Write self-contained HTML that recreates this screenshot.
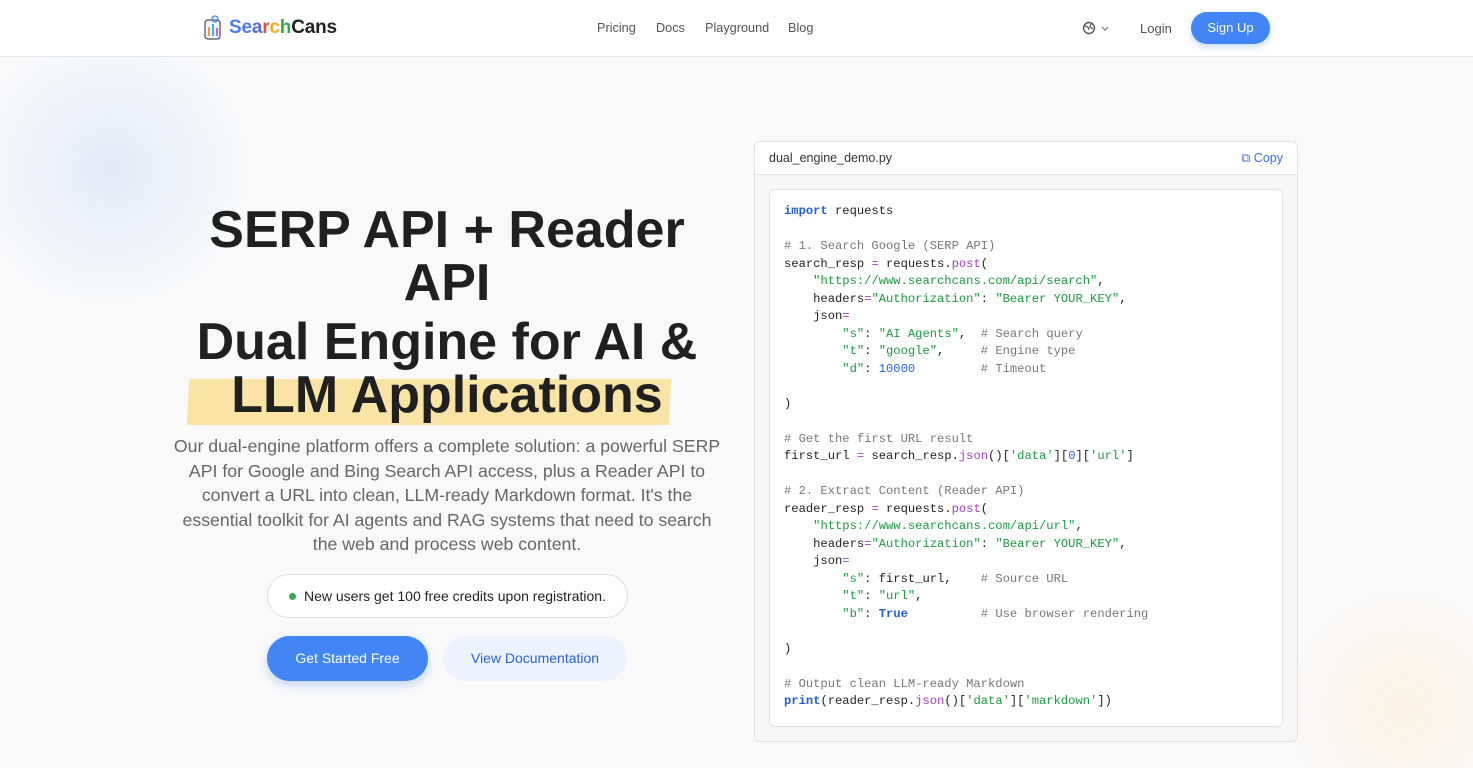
<!DOCTYPE html>
<html><head><meta charset="utf-8"><style>
*{box-sizing:border-box;margin:0;padding:0}
html,body{width:1473px;height:768px;overflow:hidden}
body{font-family:"Liberation Sans",sans-serif;background:#f9f9fa;position:relative;color:#1f1f1f}
.bg{position:absolute;left:0;top:0;width:1473px;height:768px;overflow:hidden}
.blob{position:absolute;left:-40px;top:40px;width:300px;height:260px;border-radius:50%;background:radial-gradient(circle,#e2e9f6 0%,rgba(236,240,248,0.6) 45%,rgba(249,249,250,0) 70%)}
.blob2{position:absolute;left:1273px;top:588px;width:260px;height:240px;border-radius:50%;background:radial-gradient(circle,#fbf4e6 0%,rgba(249,249,250,0) 70%)}
header{position:absolute;top:0;left:0;width:1473px;height:57px;background:#fff;border-bottom:1px solid #e6e6e6}
.logo{position:absolute;left:203px;top:14px;display:flex;align-items:center}
.logo span{font-weight:700;font-size:19px;letter-spacing:-0.2px}
nav a{position:absolute;top:21px;font-size:12.7px;color:#555;text-decoration:none}
.login{position:absolute;left:1140px;top:21px;font-size:13px;color:#555}
.signup{position:absolute;left:1191px;top:12px;width:79px;height:32px;border-radius:16px;background:#4285f4;color:#fff;font-size:13px;text-align:center;line-height:32px;box-shadow:0 3px 8px rgba(66,133,244,.3)}
h1{position:absolute;left:187px;width:520px;text-align:center;font-size:52px;font-weight:700;line-height:53px;color:#202020}
.hlbox{position:absolute;left:188px;top:379px;width:482px;height:46px;background:#f9e4a6;transform:skewX(-3deg)}
p.desc{position:absolute;left:172px;top:434px;width:550px;text-align:center;font-size:17.7px;line-height:24.6px;color:#666}
.pill{position:absolute;left:267px;top:574px;width:361px;height:44px;border:1px solid #ddd;border-radius:22px;background:#fff;font-size:14px;line-height:43px;padding-left:36px;color:#222}
.pill:before{content:"";position:absolute;left:21px;top:18px;width:7px;height:7px;border-radius:50%;background:#34a853}
.b1{position:absolute;left:267px;top:636px;width:161px;height:45px;border-radius:23px;background:#4285f4;color:#fff;font-size:14px;text-align:center;line-height:45px;box-shadow:0 4px 10px rgba(66,133,244,.3)}
.b2{position:absolute;left:443px;top:636px;width:184px;height:45px;border-radius:23px;background:#edf3fe;color:#2a63d4;font-size:14px;text-align:center;line-height:45px}
.card{position:absolute;left:754px;top:141px;width:544px;height:601px;border:1px solid #e2e2e2;border-radius:6px;background:#f7f7f8}
.ch{height:33px;background:#fff;border-bottom:1px solid #e6e6e6;border-radius:6px 6px 0 0;font-size:12.5px;line-height:33px;padding-left:14px;color:#333;position:relative}
.copy{position:absolute;right:14px;top:0;color:#3b6fd8;font-size:12.5px}
.code{position:absolute;left:14px;top:47px;width:514px;height:538px;background:#fff;border:1px solid #e2e2e2;border-radius:6px;padding:13px 0 0 14px;font-family:"Liberation Mono",monospace;font-size:12.15px;line-height:17.5px;white-space:pre;color:#222}
.k{color:#1f5fd6;font-weight:700}.c{color:#777}.s{color:#1a9a3f}.p{color:#a43fc4}.n{color:#2563eb}
</style></head><body>
<div class="bg"><div class="blob"></div><div class="blob2"></div></div>
<header>
<div class="logo"><svg width="20" height="28" viewBox="0 0 20 28"><rect x="2" y="6" width="15" height="19" rx="3" fill="#f0f4fb" stroke="#556" stroke-width="1.3"/><rect x="5" y="13" width="2" height="9" fill="#e94"/><rect x="9" y="10" width="2" height="12" fill="#4af"/><rect x="13" y="14" width="2" height="8" fill="#c6c"/><circle cx="12" cy="5" r="3" fill="none" stroke="#4285f4" stroke-width="1.3"/></svg>
<span style="margin-left:6px"><span style="color:#4a7df0">Se</span><span style="color:#5c6bd0">a</span><span style="color:#e74c3c">r</span><span style="color:#f2b01e">c</span><span style="color:#34a853">h</span><span style="color:#222">Cans</span></span></div>
<nav><a style="left:597px">Pricing</a><a style="left:656px">Docs</a><a style="left:705px">Playground</a><a style="left:788px">Blog</a></nav>
<svg style="position:absolute;left:1082px;top:21px" width="30" height="14" viewBox="0 0 30 14"><circle cx="7" cy="7" r="5.5" fill="none" stroke="#555" stroke-width="1.4"/><path d="M3 5l3 1 1 3M9 3l-1 3 3 2" stroke="#555" fill="none" stroke-width="1.2"/><path d="M20 6l3 3 3-3" stroke="#777" fill="none" stroke-width="1.2"/></svg>
<div class="login">Login</div>
<div class="signup">Sign Up</div>
</header>
<div class="hlbox"></div>
<h1 style="top:204px">SERP API + Reader API</h1>
<h1 style="top:316px;left:167px;width:560px">Dual Engine for AI &amp;<br>LLM Applications</h1>
<p class="desc">Our dual-engine platform offers a complete solution: a powerful SERP API for Google and Bing Search API access, plus a Reader API to convert a URL into clean, LLM-ready Markdown format. It's the essential toolkit for AI agents and RAG systems that need to search the web and process web content.</p>
<div class="pill">New users get 100 free credits upon registration.</div>
<div class="b1">Get Started Free</div>
<div class="b2">View Documentation</div>
<div class="card">
<div class="ch">dual_engine_demo.py<span class="copy">⧉ Copy</span></div>
<div class="code"><span class="k">import</span> requests

<span class="c"># 1. Search Google (SERP API)</span>
search_resp <span class="p">=</span> requests.<span class="p">post</span>(
    <span class="s">"https://www.searchcans.com/api/search"</span>,
    headers<span class="p">=</span><span class="s">"Authorization"</span>: <span class="s">"Bearer YOUR_KEY"</span>,
    json<span class="p">=</span>
        <span class="s">"s"</span>: <span class="s">"AI Agents"</span>,  <span class="c"># Search query</span>
        <span class="s">"t"</span>: <span class="s">"google"</span>,     <span class="c"># Engine type</span>
        <span class="s">"d"</span>: <span class="n">10000</span>         <span class="c"># Timeout</span>

)

<span class="c"># Get the first URL result</span>
first_url <span class="p">=</span> search_resp.<span class="p">json</span>()[<span class="s">'data'</span>][<span class="n">0</span>][<span class="s">'url'</span>]

<span class="c"># 2. Extract Content (Reader API)</span>
reader_resp <span class="p">=</span> requests.<span class="p">post</span>(
    <span class="s">"https://www.searchcans.com/api/url"</span>,
    headers<span class="p">=</span><span class="s">"Authorization"</span>: <span class="s">"Bearer YOUR_KEY"</span>,
    json<span class="p">=</span>
        <span class="s">"s"</span>: first_url,    <span class="c"># Source URL</span>
        <span class="s">"t"</span>: <span class="s">"url"</span>,
        <span class="s">"b"</span>: <span class="k">True</span>          <span class="c"># Use browser rendering</span>

)

<span class="c"># Output clean LLM-ready Markdown</span>
<span class="k">print</span>(reader_resp.<span class="p">json</span>()[<span class="s">'data'</span>][<span class="s">'markdown'</span>])</div>
</div>
</body></html>
